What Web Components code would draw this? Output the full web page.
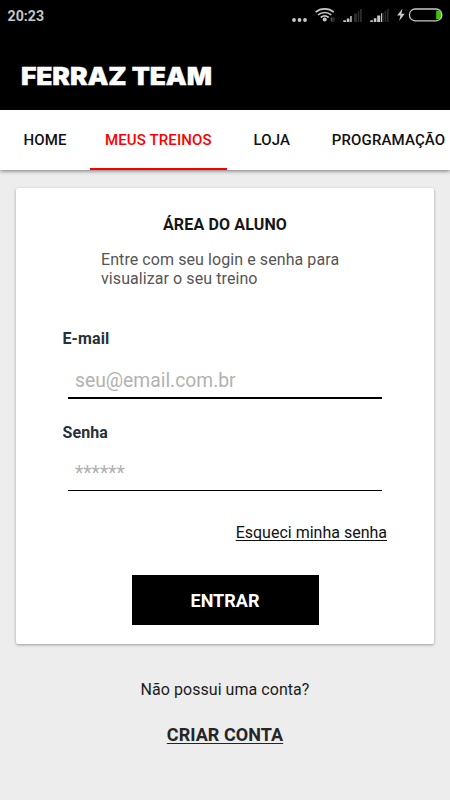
<!DOCTYPE html>
<html lang="pt-BR">
<head>
<meta charset="utf-8">
<meta name="viewport" content="width=device-width, initial-scale=1">
<title>Ferraz Team</title>
<style>
  html, body {
    margin: 0;
    height: 100%;
  }

  body {
    background: #ededed;
    font-family: Roboto, "Liberation Sans", sans-serif;
    overflow: hidden;
  }
</style>
</head>
<body>
<ferraz-app></ferraz-app>

<script>
const define = (name, html) => {
  const template = document.createElement('template')
  template.innerHTML = html

  window.customElements.define(name, class extends HTMLElement {
    constructor() {
      super()
      this.attachShadow({ mode: 'open' })
      this.shadowRoot.appendChild(template.content.cloneNode(true))
    }
  })
}

define('status-bar', `
  <style>
    :host {
      display: flex;
      align-items: center;
      justify-content: space-between;
      height: 32px;
      padding-left: 7.5px;
      background: #000;
      color: #c4c4c4;
    }

    span {
      font-size: 14.2px;
      font-weight: 700;
      line-height: 32px;
    }

    svg {
      display: block;
    }
  </style>
  <span>20:23</span>
  <svg width="170" height="32" viewBox="0 0 170 32">
    <g fill="#c8c8c8">
      <circle cx="14" cy="20" r="1.9" />
      <circle cx="19.5" cy="20" r="1.9" />
      <circle cx="25" cy="20" r="1.9" />
      <circle cx="44.7" cy="19.6" r="2" />
      <path d="M50.8 18.2l1.6-1.8v6.2l-1.6-1.8z" opacity=".45" />
      <path d="M53.4 16.4l1.2 1.8v2.6l-1.2 1.8z" opacity=".3" />
      <path d="M63.3 20.3h2.6v1.7h-2.6z M66.8 18.6h2.6V22h-2.6z M70.2 16h1.5v6h-1.5z" />
      <path d="M90.3 20.3h2.6v1.7h-2.6z M93.8 18.3h2.6V22h-2.6z M97.2 15.6h3V22h-3z M101 13.2h1V22h-1z" />
    </g>
    <g fill="#2b2b2b">
      <path d="M74 13.4h3V22h-3z M77.7 11.2h1.6V22h-1.6z M80 9h1.8v13H80z" />
      <path d="M102 12.8h1.8V22H102z M104.6 10.8h1.6V22h-1.6z M107 9h1.6v13H107z" />
    </g>
    <g fill="none" stroke="#c8c8c8" stroke-width="1.7">
      <path d="M35.6 12.2c5.3-4.4 12.9-4.4 18.2 0" />
      <path d="M38.1 14.9c3.9-3.2 9.3-3.2 13.2 0" />
      <path d="M40.7 17.5c2.4-1.9 5.6-1.9 8 0" />
    </g>
    <path d="M122.5 8.5l-5.4 7h3.3l-1.2 5.6 5.6-7.4h-3.4z" fill="#c8c8c8" />
    <path d="M156.2 10.5h1.5a4.3 4.3 0 0 1 0 8.7h-1.5z" fill="#3fc500" />
    <rect x="129.5" y="9" width="32.3" height="11.8" rx="5.6" fill="none" stroke="#c8c8c8" stroke-width="1.3" />
  </svg>
`)

define('app-header', `
  <style>
    :host {
      display: flex;
      align-items: center;
      height: 78px;
      padding: 0 20px;
      box-sizing: border-box;
      background: #000;
      color: #fff;
    }

    h1 {
      margin: 12px 0 0 0.6px;
      font: 900 24px/30px Inter, "Open Sans", sans-serif;
      letter-spacing: -0.1px;
      white-space: nowrap;
      transform: scaleX(1.1);
      transform-origin: 0 50%;
      -webkit-text-stroke: 0.4px #fff;
    }
  </style>
  <h1><slot></slot></h1>
`)

define('tab-item', `
  <style>
    :host {
      display: flex;
      flex: none;
      align-items: center;
      justify-content: center;
      box-sizing: border-box;
      min-width: 90px;
      height: 60px;
      padding: 2px 15px 0;
      border-bottom: 2px solid transparent;
      color: #111;
      font-size: 15px;
      font-weight: 500;
      letter-spacing: 0.13px;
      white-space: nowrap;
    }

    :host([active]) {
      border-color: #f80000;
      color: #ff0000;
    }
  </style>
  <slot></slot>
`)

define('tab-bar', `
  <style>
    :host {
      display: flex;
      height: 60px;
      overflow: visible;
      background: #fff;
      box-shadow: 0 1px 4px rgba(0, 0, 0, 0.5);
    }
  </style>
  <slot></slot>
`)

define('login-card', `
  <style>
    :host {
      display: flex;
      flex-direction: column;
      box-sizing: border-box;
      height: 456px;
      margin: 18px 16px 0;
      padding: 27px 46px 0;
      border-radius: 2px;
      background: #fff;
      box-shadow: 0 1px 3px rgba(0, 0, 0, 0.35);
    }

    h2 {
      margin: 0;
      color: #161616;
      font-size: 16px;
      font-weight: 700;
      letter-spacing: 0.15px;
      line-height: 19px;
      text-align: center;
    }

    p {
      width: 250px;
      margin: 16px 0 41px 39px;
      color: #555;
      font-size: 16px;
      letter-spacing: 0.08px;
      line-height: 19px;
    }
  </style>
  <h2><slot name="title"></slot></h2>
  <p><slot name="hint"></slot></p>
  <slot></slot>
`)

define('text-link', `
  <style>
    :host {
      display: block;
    }

    a {
      color: inherit;
      text-decoration: underline;
      text-decoration-thickness: 1px;
      text-underline-offset: 2px;
      text-decoration-skip-ink: none;
    }
  </style>
  <a href="#"><slot></slot></a>
`)

define('black-button', `
  <style>
    :host {
      display: block;
      width: 187px;
    }

    button {
      display: block;
      width: 100%;
      height: 50px;
      padding: 1px 0 0;
      border: 0;
      background: #000;
      color: #fff;
      font: inherit;
      font-size: 18px;
      font-weight: 700;
    }
  </style>
  <button><slot></slot></button>
`)

class FormField extends HTMLElement {
  constructor() {
    super()

    this.attachShadow({ mode: 'open' })
    this.shadowRoot.innerHTML = `
      <style>
        :host {
          display: block;
        }

        label {
          display: block;
          padding-left: 0.5px;
          color: #263238;
          font-size: 16px;
          font-weight: 700;
          letter-spacing: 0.1px;
          line-height: 19px;
        }

        input {
          display: block;
          box-sizing: border-box;
          width: 314px;
          height: 49px;
          margin: 0 0 0 6px;
          padding: 15px 7px 0;
          border: 0;
          border-bottom: 1px solid #000;
          border-radius: 0;
          background: none;
          font: inherit;
          font-size: 19.3px;
          outline: 0;
        }

        :host([focused]) input {
          height: 51px;
          padding-top: 16px;
          border-bottom-width: 2px;
        }

        input::placeholder {
          color: #b2b2b2;
          opacity: 1;
        }
      </style>
      <label for="field"></label>
      <input id="field">
    `
    this.shadowRoot.querySelector('label').textContent = this.getAttribute('label')
    const input = this.shadowRoot.querySelector('input')
    input.type = this.getAttribute('type')
    input.placeholder = this.getAttribute('placeholder')
  }
}

window.customElements.define('form-field', FormField)

define('ferraz-app', `
  <style>
    :host {
      display: flex;
      flex-direction: column;
      height: 800px;
      overflow: hidden;
    }

    .email {
      height: 94px;
    }

    .forgot {
      align-self: flex-end;
      margin: 32px 1px 0 0;
      color: #111;
      font-size: 16px;
      line-height: 19px;
    }

    black-button {
      align-self: center;
      margin-top: 33px;
    }

    footer {
      display: flex;
      flex-direction: column;
      align-items: center;
      gap: 25px;
      padding-top: 36px;
      color: #1c1c1c;
      font-size: 16px;
      letter-spacing: 0.05px;
      line-height: 19px;
    }

    .create {
      color: #262626;
      font-size: 18px;
      font-weight: 700;
      line-height: 22px;
    }
  </style>
  <status-bar></status-bar>
  <app-header>FERRAZ TEAM</app-header>
  <tab-bar>
    <tab-item>HOME</tab-item>
    <tab-item active>MEUS TREINOS</tab-item>
    <tab-item>LOJA</tab-item>
    <tab-item>PROGRAMAÇÃO</tab-item>
  </tab-bar>
  <login-card>
    <span slot="title">ÁREA DO ALUNO</span>
    <span slot="hint">Entre com seu login e senha para visualizar o seu treino</span>
    <form-field class="email" focused label="E-mail" type="email" placeholder="seu@email.com.br"></form-field>
    <form-field label="Senha" type="password" placeholder="******"></form-field>
    <text-link class="forgot">Esqueci minha senha</text-link>
    <black-button>ENTRAR</black-button>
  </login-card>
  <footer>
    <span>Não possui uma conta?</span>
    <text-link class="create">CRIAR CONTA</text-link>
  </footer>
`)
</script>
</body>
</html>
